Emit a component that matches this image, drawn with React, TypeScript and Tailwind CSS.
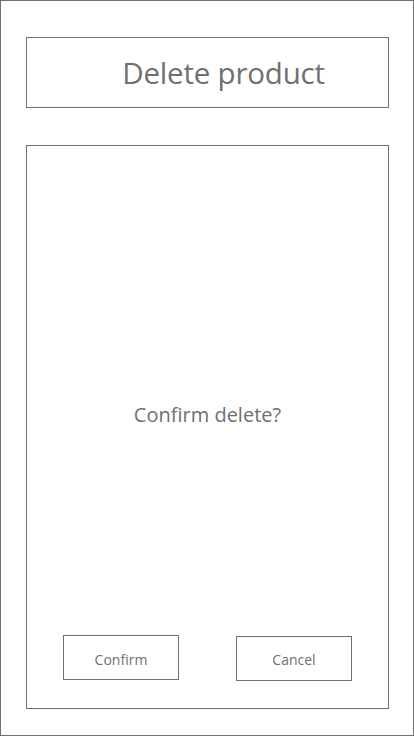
const App = () => {
  return (
    <div className="w-[414px] h-[736px] bg-white border border-[#707070] flex flex-col pl-[25px] pr-[24px] pt-[36px] text-[#707070]" style={{ fontFamily: '"Open Sans", "Noto Sans", sans-serif' }}>
      {/* Header */}
      <div className="h-[71px] border border-[#707070] flex items-center justify-center pl-[32px]">
        <h1 className="text-[29.5px] leading-none font-normal tracking-[-0.2px]">Delete product</h1>
      </div>

      {/* Dialog body */}
      <div className="mt-[37px] h-[564px] border border-[#707070] flex flex-col">
        <p className="mt-[255px] text-center text-[20px] leading-[28px]">Confirm delete?</p>

        <div className="mt-auto mb-[27px] pl-[36px] pr-[36px] flex justify-between items-start">
          <button className="w-[116px] h-[45px] pt-[3px] border border-[#707070] text-[14px] text-[#707070]">
            Confirm
          </button>
          <button className="mt-[1px] w-[116px] h-[45px] pt-[2px] border border-[#707070] text-[14px] text-[#707070]">
            Cancel
          </button>
        </div>
      </div>
    </div>
  );
};

export default App;
